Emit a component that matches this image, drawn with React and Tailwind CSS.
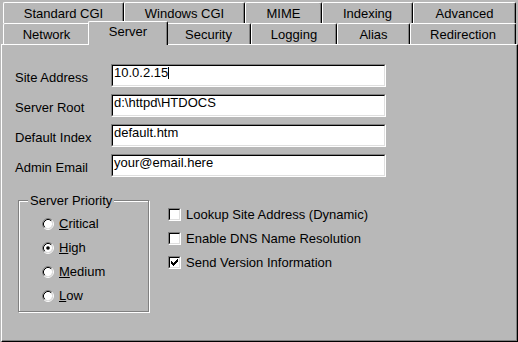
import React from 'react';

const topTabs = [
  { label: 'Standard CGI', w: 'w-[121px]' },
  { label: 'Windows CGI', w: 'w-[121px]' },
  { label: 'MIME', w: 'w-[77px]' },
  { label: 'Indexing', w: 'w-[91px]' },
  { label: 'Advanced', w: 'w-[103px]' },
];

const bottomTabs = [
  { label: 'Network', w: 'w-[87px]' },
  { label: 'Server', w: 'w-[80px]', active: true },
  { label: 'Security', w: 'w-[85px]' },
  { label: 'Logging', w: 'w-[86px]' },
  { label: 'Alias', w: 'w-[73px]' },
  { label: 'Redirection', w: 'w-[106px]' },
];

const fields = [
  { label: 'Site Address', value: '10.0.2.15', caret: true },
  { label: 'Server Root', value: 'd:\\httpd\\HTDOCS' },
  { label: 'Default Index', value: 'default.htm' },
  { label: 'Admin Email', value: 'your@email.here' },
];

const priorities = [
  { key: 'C', rest: 'ritical' },
  { key: 'H', rest: 'igh', checked: true },
  { key: 'M', rest: 'edium' },
  { key: 'L', rest: 'ow' },
];

const options = [
  { label: 'Lookup Site Address (Dynamic)' },
  { label: 'Enable DNS Name Resolution' },
  { label: 'Send Version Information', checked: true },
];

function Tab({ label, w, active }) {
  if (active) {
    return (
      <div className={`${w} relative z-10 -mx-[2px] -mt-[2px] h-[24px] shrink-0 rounded-t-[2px] border-t border-l border-r border-t-white border-l-white border-r-black bg-[#b8b8b8] pt-[2px] text-center shadow-[inset_-1px_0_0_#808080]`}>
        {label}
      </div>
    );
  }
  return (
    <div className={`${w} h-[21px] shrink-0 rounded-t-[2px] border-t border-l border-r border-t-white border-l-white border-r-black pt-[3px] text-center shadow-[inset_-1px_0_0_#808080]`}>
      {label}
    </div>
  );
}

function Field({ label, value, caret }) {
  return (
    <div className="flex h-[23px]">
      <div className="w-[96px] shrink-0 pt-[6px]">{label}</div>
      <div className="w-[275px] border border-t-[#808080] border-l-[#808080] border-b-white border-r-white">
        <div className="flex h-full border border-t-black border-l-black border-b-[#dfdfdf] border-r-[#dfdfdf] bg-white pl-[1px] leading-[13px]">
          <span>{value}</span>
          {caret && <span className="mt-[1px] h-[12px] w-[1px] bg-black" />}
        </div>
      </div>
    </div>
  );
}

function Radio({ checked }) {
  return (
    <svg width="12" height="12" viewBox="0 0 12 12" className="mt-[2px] shrink-0">
      <circle cx="6" cy="6" r="4.2" fill="#fff" />
      <path d="M2.11 9.89 A5.5 5.5 0 0 1 9.89 2.11" fill="none" stroke="#808080" strokeWidth="1" />
      <path d="M9.89 2.11 A5.5 5.5 0 0 1 2.11 9.89" fill="none" stroke="#fff" strokeWidth="1" />
      <path d="M2.82 9.18 A4.5 4.5 0 0 1 9.18 2.82" fill="none" stroke="#000" strokeWidth="1" />
      <path d="M9.18 2.82 A4.5 4.5 0 0 1 2.82 9.18" fill="none" stroke="#dfdfdf" strokeWidth="1" />
      {checked && <circle cx="6" cy="6" r="1.8" fill="#000" />}
    </svg>
  );
}

function Checkbox({ checked }) {
  return (
    <div className="mt-[1px] h-[13px] w-[13px] shrink-0 border border-t-[#808080] border-l-[#808080] border-b-white border-r-white">
      <div className="flex h-full w-full items-center justify-center border border-t-black border-l-black border-b-[#dfdfdf] border-r-[#dfdfdf] bg-white">
        {checked && (
          <svg width="7" height="7" viewBox="0 0 7 7" shapeRendering="crispEdges">
            <path
              fill="#000"
              d="M6 0h1v1H6z M5 1h2v1H5z M0 2h1v1H0z M4 2h3v1H4z M0 3h2v1H0z M3 3h3v1H3z M0 4h5v1H0z M1 5h3v1H1z M2 6h1v1H2z"
            />
          </svg>
        )}
      </div>
    </div>
  );
}

export default function App() {
  return (
    <div className="flex h-[342px] w-[518px] flex-col bg-[#b8b8b8] pl-[1px] font-['Liberation_Sans',Arial,sans-serif] text-[13px] leading-[15px] text-black">
      <div className="flex h-[23px] pl-[2px] pt-[2px]">
        {topTabs.map((t) => (
          <Tab key={t.label} {...t} />
        ))}
      </div>
      <div className="flex h-[21px] items-start pl-[2px]">
        {bottomTabs.map((t) => (
          <Tab key={t.label} {...t} />
        ))}
      </div>

      <div className="flex-1 border border-t-white border-l-white border-r-black border-b-black pl-[13px] pt-[19px] shadow-[inset_-1px_-1px_0_#808080]">
        <div className="flex flex-col gap-[7px]">
          {fields.map((f) => (
            <Field key={f.label} {...f} />
          ))}
        </div>

        <div className="mt-[23px] flex items-start">
          <div className="relative ml-[3px] h-[112px] w-[131px] border border-[#808080] pl-[23px] pt-[15px] shadow-[inset_1px_1px_0_#fff,1px_1px_0_#fff]">
            <div className="absolute -top-[8px] left-[9px] bg-[#b8b8b8] px-[2px]">Server Priority</div>
            <div className="flex flex-col gap-[9px]">
              {priorities.map((p) => (
                <div key={p.key} className="flex items-start gap-[5px]">
                  <Radio checked={p.checked} />
                  <span>
                    <span className="underline">{p.key}</span>
                    {p.rest}
                  </span>
                </div>
              ))}
            </div>
          </div>

          <div className="ml-[19px] mt-[7px] flex flex-col gap-[9px]">
            {options.map((o) => (
              <div key={o.label} className="flex items-start gap-[5px]">
                <Checkbox checked={o.checked} />
                <span>{o.label}</span>
              </div>
            ))}
          </div>
        </div>
      </div>
    </div>
  );
}
